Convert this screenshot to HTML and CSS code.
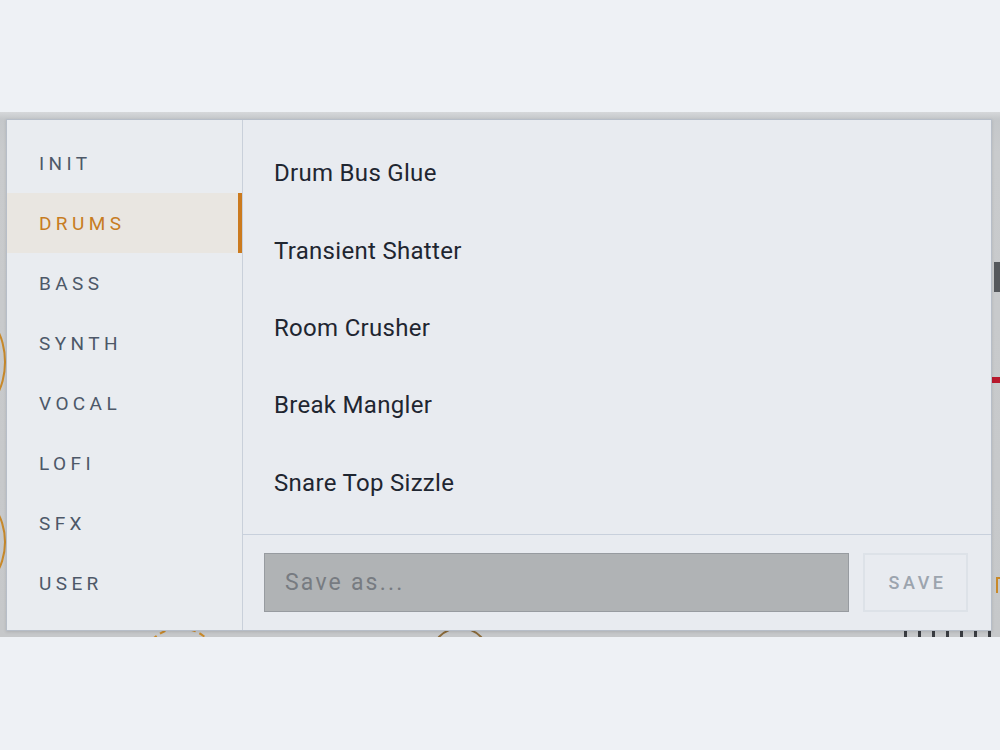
FILE: index.html
```html
<!DOCTYPE html>
<html>
<head>
<meta charset="utf-8">
<link rel="stylesheet" href="styles.css">
</head>
<body>
<div class="page">
  <div class="plugin">
    <span class="knob knob-a"></span>
    <span class="knob knob-b"></span>
    <span class="knob knob-c"></span>
    <span class="knob knob-d"></span>
    <span class="mark-red"></span>
    <span class="mark-dark"></span>
    <span class="mark-p"></span>
    <span class="mark-text"></span>
    <div class="popup">
      <nav class="cats">
        <div class="cat">INIT</div>
        <div class="cat active">DRUMS</div>
        <div class="cat">BASS</div>
        <div class="cat">SYNTH</div>
        <div class="cat">VOCAL</div>
        <div class="cat">LOFI</div>
        <div class="cat">SFX</div>
        <div class="cat">USER</div>
      </nav>
      <section class="main">
        <ul class="presets">
          <li>Drum Bus Glue</li>
          <li>Transient Shatter</li>
          <li>Room Crusher</li>
          <li>Break Mangler</li>
          <li>Snare Top Sizzle</li>
        </ul>
        <div class="footer">
          <input class="save-input" type="text" placeholder="Save as...">
          <button class="save-btn">SAVE</button>
        </div>
      </section>
    </div>
  </div>
</div>
</body>
</html>
```

FILE: styles.css
```css
* { box-sizing: border-box; }
html, body { margin: 0; padding: 0; }
body {
  background: #eef1f5;
  font-family: Roboto, "Liberation Sans", sans-serif;
  width: 1000px;
  height: 750px;
  overflow: hidden;
}
.page { padding-top: 112px; }
.plugin {
  position: relative;
  height: 525px;
  background: linear-gradient(#d6d8da 0, #c4c7ca 7px, #c9cbcd 40px, #c6c8ca 100%);
  overflow: hidden;
}
.knob {
  position: absolute;
  border: 2px solid #c8892a;
  border-radius: 50%;
}
.knob-a { left: -58px; top: 200px; width: 64px; height: 100px; }
.knob-b { left: -70px; top: 380px; width: 76px; height: 100px; }
.knob-c { left: 140px; top: 515px; width: 80px; height: 80px; border-style: dashed; }
.knob-d { left: 430px; top: 515px; width: 60px; height: 60px; border-color: #8a6a3a; }
.mark-red {
  position: absolute; right: 0; top: 265px; width: 8px; height: 6px; background: #b8182c;
}
.mark-dark {
  position: absolute; right: 0; top: 150px; width: 6px; height: 30px; background: #55585c;
}
.mark-p {
  position: absolute; right: 0; top: 465px; width: 4px; height: 16px;
  border-left: 2px solid #c8892a; border-top: 2px solid #c8892a;
}
.mark-text {
  position: absolute; right: 0; top: 519px; width: 96px; height: 6px;
  background: repeating-linear-gradient(90deg, #3a3d42 0 3px, transparent 3px 14px);
}
.popup {
  position: absolute;
  left: 6px; top: 7px;
  width: 986px; height: 512px;
  display: flex;
  background: #e8ebf0;
  border: 1px solid #b7bec8;
  box-shadow: 0 1px 3px rgba(0,0,0,0.12);
}
.cats {
  width: 236px;
  padding-top: 13px;
  background: #e9ecf0;
  border-right: 1px solid #c9d0da;
  display: flex;
  flex-direction: column;
}
.cat {
  height: 60px;
  display: flex;
  align-items: center;
  padding-left: 32px;
  font-size: 19px;
  letter-spacing: 4.4px;
  color: #4d5868;
  font-weight: 400;
}
.cat.active {
  background: #e9e6e1;
  color: #c77c22;
  box-shadow: inset -4px 0 0 #cb7a1e;
}
.main {
  flex: 1;
  display: flex;
  flex-direction: column;
}
.presets {
  list-style: none;
  margin: 0;
  padding: 13px 0 14px;
  border-bottom: 1px solid #c8d0dc;
}
.presets li {
  height: 77.4px;
  display: flex;
  align-items: center;
  padding: 3px 0 0 31px;
  font-size: 24px;
  letter-spacing: 0.3px;
  color: #1f2631;
}
.footer {
  flex: 1;
  display: flex;
  padding: 18px 23px 19px 21px;
  gap: 14px;
}
.save-input {
  flex: 1;
  height: 59px;
  margin: 0;
  background: #b0b3b5;
  border: 1px solid #979ba0;
  padding: 0 20px;
  font-family: inherit;
  font-size: 23px;
  letter-spacing: 2.2px;
  color: #333;
  outline: none;
}
.save-input::placeholder { color: #777b81; }
.save-btn {
  width: 105px;
  height: 59px;
  margin: 0;
  background: #e8ebf0;
  border: 2px solid #dde2e8;
  font-family: inherit;
  font-size: 18px;
  font-weight: 500;
  letter-spacing: 3.5px;
  color: #9ca4ae;
  padding: 0 0 0 4px;
}
```
